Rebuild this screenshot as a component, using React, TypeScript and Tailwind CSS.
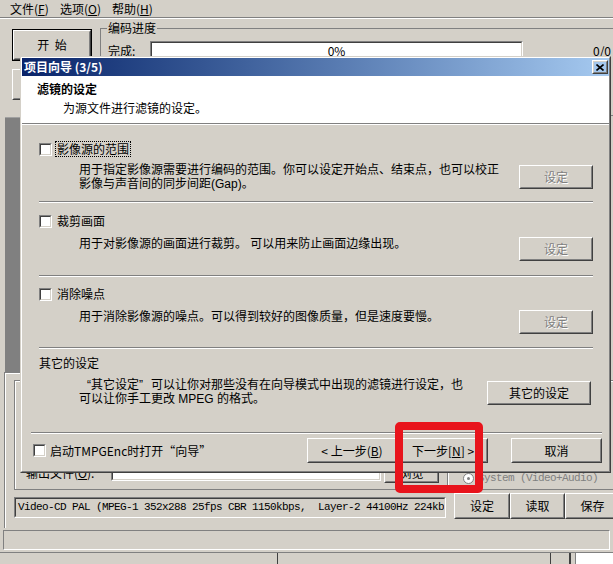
import React from 'react';

const raisedOuter = 'border border-t-white border-l-white border-r-[#404040] border-b-[#404040]';
const raisedInner = 'border border-t-[#d4d0c8] border-l-[#d4d0c8] border-r-[#808080] border-b-[#808080]';
const sunkenOuter = 'border border-t-[#808080] border-l-[#808080] border-r-white border-b-white';
const sunkenInner = 'border border-t-[#404040] border-l-[#404040] border-r-[#d4d0c8] border-b-[#d4d0c8]';

const Btn: React.FC<{ className?: string; disabled?: boolean; children?: React.ReactNode }> = ({ className = '', disabled, children }) => (
  <div className={`flex shrink-0 ${raisedOuter} ${className}`}>
    <div
      className={`flex flex-1 items-center justify-center whitespace-nowrap ${raisedInner} ${
        disabled ? 'text-[#808080] [text-shadow:1px_1px_0_#fff]' : ''
      }`}
    >
      {children}
    </div>
  </div>
);

const Check = () => (
  <span className={`block w-[13px] h-[13px] shrink-0 ${sunkenOuter}`}>
    <span className={`block w-full h-full bg-white ${sunkenInner}`} />
  </span>
);

const Etched: React.FC<{ className?: string }> = ({ className = '' }) => (
  <div className={`h-[2px] shrink-0 border-t border-t-[#808080] border-b border-b-white ${className}`} />
);

// two-line descriptions: Latin primary font keeps the line boxes tight
const descFont = "font-['Liberation_Sans','Noto_Sans_CJK_SC',sans-serif] leading-[14px]";

const filters = [
  {
    label: '影像源的范围',
    focus: true,
    lines: ['用于指定影像源需要进行编码的范围。你可以设定开始点、结束点，也可以校正', '影像与声音间的同步间距(Gap)。'],
    rowMt: 'mt-[16px]',
    descMt: 'mt-[6px]',
    btnMt: 'mt-[2px]',
    sepMt: 'mt-[10px]',
  },
  {
    label: '裁剪画面',
    focus: false,
    lines: ['用于对影像源的画面进行裁剪。 可以用来防止画面边缘出现。'],
    rowMt: 'mt-[10px]',
    descMt: 'mt-[8px]',
    btnMt: 'mt-0',
    sepMt: 'mt-[14px]',
  },
  {
    label: '消除噪点',
    focus: false,
    lines: ['用于消除影像源的噪点。可以得到较好的图像质量，但是速度要慢。'],
    rowMt: 'mt-[9px]',
    descMt: 'mt-[8px]',
    btnMt: 'mt-0',
    sepMt: 'mt-[13px]',
  },
];

const Wizard = () => (
  <div className="absolute left-[20px] top-[56px] w-[591px] h-[417px] border border-t-[#d4d0c8] border-l-[#d4d0c8] border-r-[#404040] border-b-[#404040]">
    <div className="h-full flex flex-col bg-[#d4d0c8] border border-t-white border-l-white border-r-[#808080] border-b-[#808080]">
      {/* title bar */}
      <div className="h-[18px] shrink-0 flex items-center pl-[2px] bg-linear-to-r from-[#0a246a] to-[#a6caf0]">
        <span className="text-white font-bold leading-[16px]">项目向导 (3/5)</span>
        <Btn className="ml-auto mr-[1px] w-[16px] h-[14px]">
          <svg width="8" height="7" viewBox="0 0 8 7">
            <path d="M0.5 0.5L7.5 6.5M7.5 0.5L0.5 6.5" stroke="#000" strokeWidth="1.6" />
          </svg>
        </Btn>
      </div>
      {/* header */}
      <div className="h-[47px] shrink-0 bg-white pt-[5px] leading-[16px]">
        <div className="pl-[15px] font-bold">滤镜的设定</div>
        <div className="pl-[41px] mt-[3px]">为源文件进行滤镜的设定。</div>
      </div>
      <Etched />
      {/* body */}
      <div className="flex flex-col pl-[17px] pr-[16px]">
        {filters.map((f) => (
          <React.Fragment key={f.label}>
            <div className={`flex items-center h-[16px] ${f.rowMt}`}>
              <Check />
              <span
                className={`ml-[3px] px-[1px] leading-[14px] border ${
                  f.focus ? 'border-dotted border-black' : 'border-transparent'
                }`}
              >
                {f.label}
              </span>
            </div>
            <div className={`flex items-start pl-[40px] ${f.descMt}`}>
              <div className={`flex-1 whitespace-nowrap ${descFont}`}>
                {f.lines.map((l) => (
                  <div key={l}>{l}</div>
                ))}
              </div>
              <Btn disabled className={`w-[74px] h-[24px] ${f.btnMt}`}>
                设定
              </Btn>
            </div>
            <Etched className={f.sepMt} />
          </React.Fragment>
        ))}
        <div className="flex items-center h-[16px] mt-[6px]">其它的设定</div>
        <div className="flex items-start pl-[40px] mt-[7px]">
          <div className={`flex-1 whitespace-nowrap ${descFont}`}>
            <div>
              <span className="inline-block w-[12px] text-right">“</span>其它设定
              <span className="inline-block w-[12px]">”</span>可以让你对那些没有在向导模式中出现的滤镜进行设定，也
            </div>
            <div>可以让你手工更改 MPEG 的格式。</div>
          </div>
          <Btn className="mt-[3px] mr-[2px] w-[104px] h-[24px]">其它的设定</Btn>
        </div>
        <Etched className="mt-[26px] -ml-[8px] -mr-[9px]" />
        <div className="mt-[4px] -ml-[6px] -mr-[9px] flex items-center h-[25px]">
          <Check />
          <span className="ml-[4px]">启动TMPGEnc时打开“向导”</span>
          <Btn className="ml-auto w-[90px] h-[25px]">
            &lt; 上一步(<span className="underline">B</span>)
          </Btn>
          <Btn className="ml-[1px] w-[90px] h-[25px]">
            下一步[<span className="underline">N</span>] &gt;
          </Btn>
          <Btn className="ml-[23px] w-[91px] h-[25px]">取消</Btn>
        </div>
      </div>
    </div>
  </div>
);

export default function App() {
  return (
    <div className="relative w-[613px] h-[564px] overflow-hidden bg-[#d4d0c8] text-black text-[12px] font-['Noto_Sans_CJK_SC',sans-serif]">
      {/* menu */}
      <div className="h-[17px] flex items-center pl-[10px] leading-[14px]">
        <span className="w-[50px]">文件(<span className="underline">F</span>)</span>
        <span className="w-[52px]">选项(<span className="underline">O</span>)</span>
        <span>帮助(<span className="underline">H</span>)</span>
      </div>
      <Etched />

      {/* encode area */}
      <div className="h-[98px] flex">
        <div className="w-[100px] shrink-0 pl-[12px] flex flex-col">
          <div className="mt-[10px] w-[80px] h-[32px] border border-black flex">
            <Btn className="flex-1">开&nbsp;&nbsp;始</Btn>
          </div>
          <Btn className="mt-[8px] w-[80px] h-[31px]" />
        </div>
        <fieldset className="shrink-0 w-[540px] h-[96px] mt-[1px] border border-[#808080]">
          <legend className="ml-[6px] px-[1px] leading-[16px]">编码进度</legend>
          <div className="flex items-center mt-[5px]">
            <span className="ml-[7px] w-[42px]">完成:</span>
            <div className={`w-[373px] h-[20px] ${sunkenOuter}`}>
              <div className={`h-full bg-white flex items-center justify-center ${sunkenInner}`}>0%</div>
            </div>
            <span className="ml-[70px]">0/0</span>
          </div>
        </fieldset>
      </div>

      {/* middle */}
      <div className="h-[255px] flex">
        <div className="ml-[5px] w-[15px] h-full bg-[#808080] border-t border-t-[#a0a0a0]" />
      </div>

      {/* lower frame */}
      <div className="h-[156px] ml-[4px] mr-[2px] border-t border-l border-t-[#808080] border-l-[#808080] [box-shadow:inset_1px_1px_0_#fff] pl-[9px] pt-[7px]">
        <div className="w-[610px] h-[110px] border border-[#808080] [box-shadow:inset_1px_1px_0_#fff] pt-[81px] pl-[11px] flex items-start">
          <span className="w-[85px] mt-[2px]">输出文件(<span className="underline">O</span>):</span>
          <div className={`w-[270px] h-[19px] ${sunkenOuter}`}>
            <div className={`h-full bg-white ${sunkenInner}`} />
          </div>
          <Btn className="ml-[3px] w-[55px] h-[21px]">浏览</Btn>
          <div className="ml-[8px] w-[2px] h-[28px] border-l border-l-[#808080] border-r border-r-white" />
          <div className="ml-[14px] mt-[8px] flex items-center text-[#808080] font-['Liberation_Mono',monospace] text-[11px] tracking-[-0.6px]">
            <span className="w-[11px] h-[11px] rounded-full border border-[#808080] bg-white flex items-center justify-center mr-[4px]">
              <span className="w-[3px] h-[3px] rounded-full bg-[#808080]" />
            </span>
            System (Video+Audio)
          </div>
        </div>
        <div className="flex mt-[3px]">
          <div className={`mt-[4px] w-[433px] h-[21px] ${sunkenOuter}`}>
            <div className={`h-full flex items-center pl-[2px] whitespace-nowrap overflow-hidden font-['Liberation_Mono',monospace] text-[11px] tracking-[-0.6px] ${sunkenInner}`}>
              Video-CD PAL (MPEG-1 352x288 25fps CBR 1150kbps,&nbsp;&nbsp;Layer-2 44100Hz 224kb
            </div>
          </div>
          <Btn className="ml-[8px] w-[56px] h-[26px]">设定</Btn>
          <Btn className="w-[55px] h-[26px]">读取</Btn>
          <Btn className="w-[55px] h-[26px]">保存</Btn>
        </div>
      </div>

      {/* status */}
      <div className="h-[24px] pt-[2px] px-[3px]">
        <div className="h-[20px] border border-t-[#808080] border-l-[#808080] border-r-white border-b-white" />
      </div>

      {/* bottom band */}
      <div className="h-[12px] flex border-t border-t-[#808080]">
        <div className="w-[278px] border-r border-r-[#404040]" />
        <div className="w-[273px] border-r border-r-[#404040]" />
        <div className="w-[20px] border-r-2 border-r-[#404040]" />
        <div className="flex-1 ml-[4px] bg-white border-l border-l-[#808080]" />
      </div>

      <Wizard />

      {/* red highlight */}
      <div className="absolute left-[395px] top-[422px] w-[88px] h-[71px] border-[8px] border-[#e8141c] rounded-[5px]" />
    </div>
  );
}
